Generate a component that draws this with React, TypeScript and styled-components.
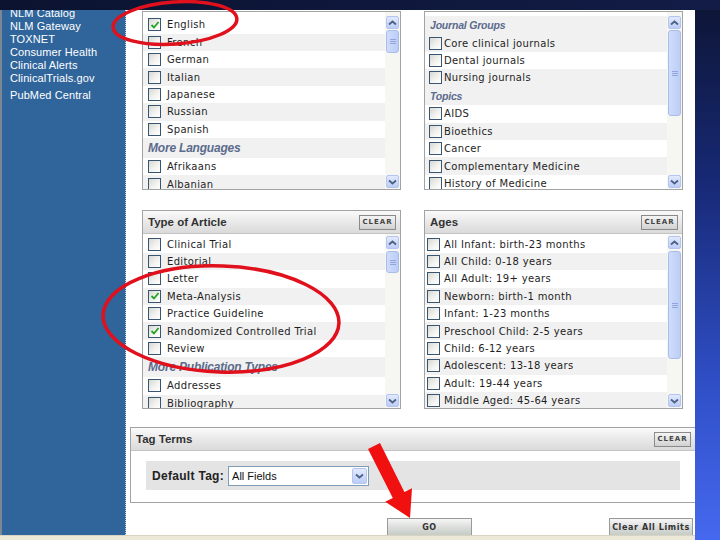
import React from 'react';
import styled, { createGlobalStyle } from 'styled-components';

const GlobalStyle = createGlobalStyle`
  html, body { margin: 0; padding: 0; }
  body {
    width: 720px;
    height: 540px;
    overflow: hidden;
    background: #0e1636;
    font-family: "DejaVu Sans", Verdana, sans-serif;
  }
  * { box-sizing: border-box; }
`;

const Slide = styled.div`
  position: relative;
  width: 720px;
  height: 540px;
  display: flex;
  flex-direction: column;
  overflow: hidden;
  background: linear-gradient(180deg, #0d1534 0%, #182a78 35%, #3050c8 72%, #4668ee 100%);
`;

const TopBand = styled.div`
  flex: none;
  height: 10px;
  background: linear-gradient(90deg, #0b1330, #121c46);
`;

const Stage = styled.div`
  flex: 1;
  display: flex;
  min-height: 0;
`;

const Shot = styled.div`
  width: 695px;
  flex: none;
  display: flex;
  flex-direction: column;
  background: #fff;
  overflow: hidden;
`;

const Body = styled.div`
  flex: 1;
  display: flex;
  min-height: 0;
`;

const StatusBar = styled.div`
  flex: none;
  height: 5px;
  background: #ece9d8;
  border-top: 1px solid #d8d4c4;
`;

const Sidebar = styled.nav`
  width: 126px;
  flex: none;
  background: #30659b;
  border-left: 2px solid #7b8794;
  border-right: 1px dotted #c0cad8;
  padding-left: 8px;
  overflow: hidden;
`;

const SideList = styled.ul`
  list-style: none;
  margin: -3px 0 0;
  padding: 0;
`;

const SideItem = styled.li<{ $gap?: number }>`
  font-family: "Liberation Sans", Arial, sans-serif;
  font-size: 11px;
  line-height: 13.1px;
  color: #fff;
  letter-spacing: 0.1px;
  margin-top: ${p => p.$gap ?? 0}px;
  white-space: nowrap;
`;

const Content = styled.main`
  flex: 1;
  display: flex;
  flex-direction: column;
  padding: 1px 11px 0 16px;
  min-width: 0;
`;

const PanelGrid = styled.div<{ $h: number; $mt?: number }>`
  flex: none;
  display: grid;
  grid-template-columns: 259px 259px;
  column-gap: 23px;
  height: ${p => p.$h}px;
  margin-top: ${p => p.$mt ?? 0}px;
`;

const Panel = styled.section`
  display: flex;
  flex-direction: column;
  border: 1px solid #a3a3a3;
  background: #fff;
  overflow: hidden;
  min-height: 0;
`;

const PanelHeader = styled.header`
  flex: none;
  height: 23px;
  display: flex;
  align-items: center;
  justify-content: space-between;
  padding: 0 4px 0 5px;
  background: linear-gradient(180deg, #fafafa 0%, #e9e9e9 50%, #dadada 100%);
  border-bottom: 1px solid #c4c4c4;
`;

const HeaderTitle = styled.h3`
  margin: 0;
  font-family: "Liberation Sans", Arial, sans-serif;
  font-size: 11.5px;
  font-weight: bold;
  color: #333;
`;

const ClearButton = styled.button`
  width: 37px;
  height: 15px;
  padding: 0;
  border: 1px solid #8a8a8a;
  background: linear-gradient(180deg, #f4f4f4, #d2d2d2);
  font-family: "DejaVu Sans", sans-serif;
  font-size: 7px;
  font-weight: bold;
  letter-spacing: 1px;
  color: #444;
`;

const PanelBody = styled.div`
  flex: 1;
  display: flex;
  min-height: 0;
`;

const List = styled.div<{ $pt: number }>`
  flex: 1;
  min-width: 0;
  padding-top: ${p => p.$pt}px;
  overflow: hidden;
`;

const Row = styled.div<{ $shade: boolean; $indent: number }>`
  height: 17.4px;
  display: flex;
  align-items: center;
  padding-left: ${p => p.$indent}px;
  background: ${p => (p.$shade ? '#f1f1f1' : '#fff')};
`;

const Box = styled.span`
  flex: none;
  width: 13px;
  height: 13px;
  border: 1px solid #3a556f;
  background: linear-gradient(135deg, #d8d8d2 0%, #f4f4f2 60%, #fff 100%);
  display: flex;
  align-items: center;
  justify-content: center;
`;

const Label = styled.span<{ $gap: number }>`
  margin-left: ${p => p.$gap}px;
  font-family: "DejaVu Sans", Verdana, sans-serif;
  font-size: 10px;
  letter-spacing: 0.35px;
  color: #1e1e1e;
  white-space: nowrap;
`;

const SubHead = styled.div<{ $h: number; $size: number; $indent: number }>`
  height: ${p => p.$h}px;
  display: flex;
  align-items: center;
  padding-left: ${p => p.$indent}px;
  background: #f1f1f1;
  font-family: "Liberation Sans", Arial, sans-serif;
  font-style: italic;
  font-weight: bold;
  font-size: ${p => p.$size}px;
  letter-spacing: -0.2px;
  color: #5b6b8c;
  white-space: nowrap;
`;

const Scrollbar = styled.div<{ $pt: number }>`
  width: 15px;
  flex: none;
  display: flex;
  flex-direction: column;
  padding: ${p => p.$pt}px 0 1px;
  background: #f6f6f3;
`;

const ScrollArrow = styled.div`
  flex: none;
  height: 13px;
  margin: 0 1px;
  border: 1px solid #b3c5f0;
  border-radius: 2px;
  background: linear-gradient(180deg, #e2eafd, #bccdf6);
  display: flex;
  align-items: center;
  justify-content: center;
`;

const Track = styled.div`
  flex: 1;
  min-height: 0;
  padding: 1px 1px;
`;

const Thumb = styled.div<{ $top: number; $h: number }>`
  margin-top: ${p => p.$top}px;
  height: ${p => p.$h}px;
  border: 1px solid #a9bde9;
  border-radius: 3px;
  background: linear-gradient(90deg, #d0dcfc, #bccdf6);
  display: flex;
  flex-direction: column;
  align-items: center;
  justify-content: center;
  gap: 1px;
`;

const Grip = styled.span`
  width: 6px;
  height: 1px;
  background: #8ea6dc;
`;

const TagPanel = styled(Panel)`
  flex: none;
  height: 76px;
  margin: 18px -11px 0 -12px;
  border-right: none;
`;

const TagInner = styled.div`
  padding: 10px 15px 0;
`;

const FieldBox = styled.div`
  height: 29px;
  display: flex;
  align-items: center;
  padding-left: 6px;
  background: #e4e4e4;
`;

const FieldLabel = styled.label`
  font-family: "Liberation Sans", Arial, sans-serif;
  font-weight: bold;
  font-size: 12px;
  letter-spacing: 0.3px;
  color: #222;
`;

const Select = styled.div`
  margin-left: 4px;
  width: 141px;
  height: 20px;
  border: 1px solid #7f9db9;
  background: #fff;
  display: flex;
  align-items: center;
  justify-content: space-between;
  padding: 0 1px 0 3px;
  font-family: "Liberation Sans", Arial, sans-serif;
  font-size: 11px;
  color: #111;
`;

const SelectArrow = styled.span`
  width: 15px;
  height: 16px;
  border: 1px solid #b3c5f0;
  border-radius: 2px;
  background: linear-gradient(180deg, #e2eafd, #bccdf6);
  display: flex;
  align-items: center;
  justify-content: center;
`;

const ButtonRow = styled.div`
  flex: none;
  height: 17px;
  margin: 15px -9px 0 0;
  display: flex;
`;

const ActionButton = styled.button<{ $w: number; $ml?: number }>`
  width: ${p => p.$w}px;
  height: 17px;
  margin-left: ${p => (p.$ml === undefined ? 'auto' : `${p.$ml}px`)};
  padding: 0;
  border: 1px solid #9a9a9a;
  border-bottom: none;
  background: linear-gradient(180deg, #f6f6f6 0%, #dcdedc 50%, #c6ccc6 100%);
  font-family: "DejaVu Sans", sans-serif;
  font-size: 8px;
  font-weight: bold;
  letter-spacing: 0.6px;
  color: #333;
`;

const Overlay = styled.svg`
  position: absolute;
  left: 0;
  top: 0;
  pointer-events: none;
`;

const RightStrip = styled.div`
  flex: 1;
`;

type Item =
  | { kind: 'head'; text: string }
  | { kind: 'row'; text: string; checked?: boolean; shade: boolean };

const head = (text: string): Item => ({ kind: 'head', text });
const row = (text: string, shade: boolean, checked = false): Item => ({ kind: 'row', text, shade, checked });

const languages: Item[] = [
  row('English', false, true),
  row('French', true),
  row('German', false),
  row('Italian', true),
  row('Japanese', false),
  row('Russian', true),
  row('Spanish', false),
  head('More Languages'),
  row('Afrikaans', false),
  row('Albanian', true),
];

const journals: Item[] = [
  head('Journal Groups'),
  row('Core clinical journals', true),
  row('Dental journals', false),
  row('Nursing journals', true),
  head('Topics'),
  row('AIDS', false),
  row('Bioethics', true),
  row('Cancer', false),
  row('Complementary Medicine', true),
  row('History of Medicine', false),
];

const articleTypes: Item[] = [
  row('Clinical Trial', false),
  row('Editorial', true),
  row('Letter', false),
  row('Meta-Analysis', true, true),
  row('Practice Guideline', false),
  row('Randomized Controlled Trial', true, true),
  row('Review', false),
  head('More Publication Types'),
  row('Addresses', false),
  row('Bibliography', true),
];

const ages: Item[] = [
  'All Infant: birth-23 months',
  'All Child: 0-18 years',
  'All Adult: 19+ years',
  'Newborn: birth-1 month',
  'Infant: 1-23 months',
  'Preschool Child: 2-5 years',
  'Child: 6-12 years',
  'Adolescent: 13-18 years',
  'Adult: 19-44 years',
  'Middle Aged: 45-64 years',
].map((t, i) => row(t, i % 2 === 1));

const Chevron = ({ down }: { down?: boolean }) => (
  <svg width="9" height="6" viewBox="0 0 9 6">
    <polyline
      points={down ? '1,1.5 4.5,4.5 8,1.5' : '1,4.5 4.5,1.5 8,4.5'}
      fill="none"
      stroke="#4d6185"
      strokeWidth="1.8"
    />
  </svg>
);

const Check = () => (
  <svg width="10" height="10" viewBox="0 0 10 10">
    <polyline points="1.5,5 4,7.5 8.5,2" fill="none" stroke="#22a322" strokeWidth="1.8" />
  </svg>
);

const ScrollBar = ({ pt, top, h }: { pt: number; top: number; h: number }) => (
  <Scrollbar $pt={pt}>
    <ScrollArrow><Chevron /></ScrollArrow>
    <Track>
      <Thumb $top={top} $h={h}>
        <Grip /><Grip /><Grip />
      </Thumb>
    </Track>
    <ScrollArrow><Chevron down /></ScrollArrow>
  </Scrollbar>
);

type ListStyle = { indent: number; gap: number; headH: number; headSize: number; headIndent: number };

const CheckList = ({ items, pt, look }: { items: Item[]; pt: number; look: ListStyle }) => (
  <List $pt={pt}>
    {items.map(it =>
      it.kind === 'head' ? (
        <SubHead key={it.text} $h={look.headH} $size={look.headSize} $indent={look.headIndent}>
          {it.text}
        </SubHead>
      ) : (
        <Row key={it.text} $shade={it.shade} $indent={look.indent}>
          <Box>{it.checked && <Check />}</Box>
          <Label $gap={look.gap}>{it.text}</Label>
        </Row>
      )
    )}
  </List>
);

const wide: ListStyle = { indent: 5, gap: 6, headH: 20, headSize: 12, headIndent: 5 };
const tight: ListStyle = { indent: 4, gap: 2, headH: 18.5, headSize: 10.5, headIndent: 5 };
const agesLook: ListStyle = { indent: 2, gap: 4, headH: 18, headSize: 11, headIndent: 5 };

export default function App() {
  return (
    <>
      <GlobalStyle />
      <Slide>
        <TopBand />
        <Stage>
          <Shot>
            <Body>
              <Sidebar>
                <SideList>
                  <SideItem>NLM Catalog</SideItem>
                  <SideItem>NLM Gateway</SideItem>
                  <SideItem>TOXNET</SideItem>
                  <SideItem>Consumer Health</SideItem>
                  <SideItem>Clinical Alerts</SideItem>
                  <SideItem>ClinicalTrials.gov</SideItem>
                  <SideItem $gap={3}>PubMed Central</SideItem>
                </SideList>
              </Sidebar>
              <Content>
                <PanelGrid $h={179}>
                  <Panel>
                    <PanelBody>
                      <CheckList items={languages} pt={4.3} look={wide} />
                      <ScrollBar pt={4} top={0} h={23} />
                    </PanelBody>
                  </Panel>
                  <Panel>
                    <PanelBody>
                      <CheckList items={journals} pt={4} look={tight} />
                      <ScrollBar pt={4} top={0} h={86} />
                    </PanelBody>
                  </Panel>
                </PanelGrid>
                <PanelGrid $h={199} $mt={20}>
                  <Panel>
                    <PanelHeader>
                      <HeaderTitle>Type of Article</HeaderTitle>
                      <ClearButton>CLEAR</ClearButton>
                    </PanelHeader>
                    <PanelBody>
                      <CheckList items={articleTypes} pt={1.5} look={wide} />
                      <ScrollBar pt={2} top={1} h={22} />
                    </PanelBody>
                  </Panel>
                  <Panel>
                    <PanelHeader>
                      <HeaderTitle>Ages</HeaderTitle>
                      <ClearButton>CLEAR</ClearButton>
                    </PanelHeader>
                    <PanelBody>
                      <CheckList items={ages} pt={1.5} look={agesLook} />
                      <ScrollBar pt={2} top={1} h={108} />
                    </PanelBody>
                  </Panel>
                </PanelGrid>
                <TagPanel>
                  <PanelHeader>
                    <HeaderTitle>Tag Terms</HeaderTitle>
                    <ClearButton>CLEAR</ClearButton>
                  </PanelHeader>
                  <TagInner>
                    <FieldBox>
                      <FieldLabel>Default Tag:</FieldLabel>
                      <Select>
                        All Fields
                        <SelectArrow><Chevron down /></SelectArrow>
                      </Select>
                    </FieldBox>
                  </TagInner>
                </TagPanel>
                <ButtonRow>
                  <ActionButton $w={85} $ml={245}>GO</ActionButton>
                  <ActionButton $w={84}>Clear All Limits</ActionButton>
                </ButtonRow>
              </Content>
            </Body>
            <StatusBar />
          </Shot>
          <RightStrip />
        </Stage>
        <Overlay width="720" height="540" viewBox="0 0 720 540">
          <ellipse cx="175" cy="23" rx="62" ry="21" transform="rotate(-4 175 23)" fill="none" stroke="#e0101c" strokeWidth="3.5" />
          <ellipse cx="221" cy="319" rx="118" ry="53" transform="rotate(2 221 319)" fill="none" stroke="#e0101c" strokeWidth="3.5" />
          <polygon
            points="368,449 380,443 404.4,492 412,488.3 410,518 385.2,501.7 392.8,497.9"
            fill="#f01010"
          />
        </Overlay>
      </Slide>
    </>
  );
}
